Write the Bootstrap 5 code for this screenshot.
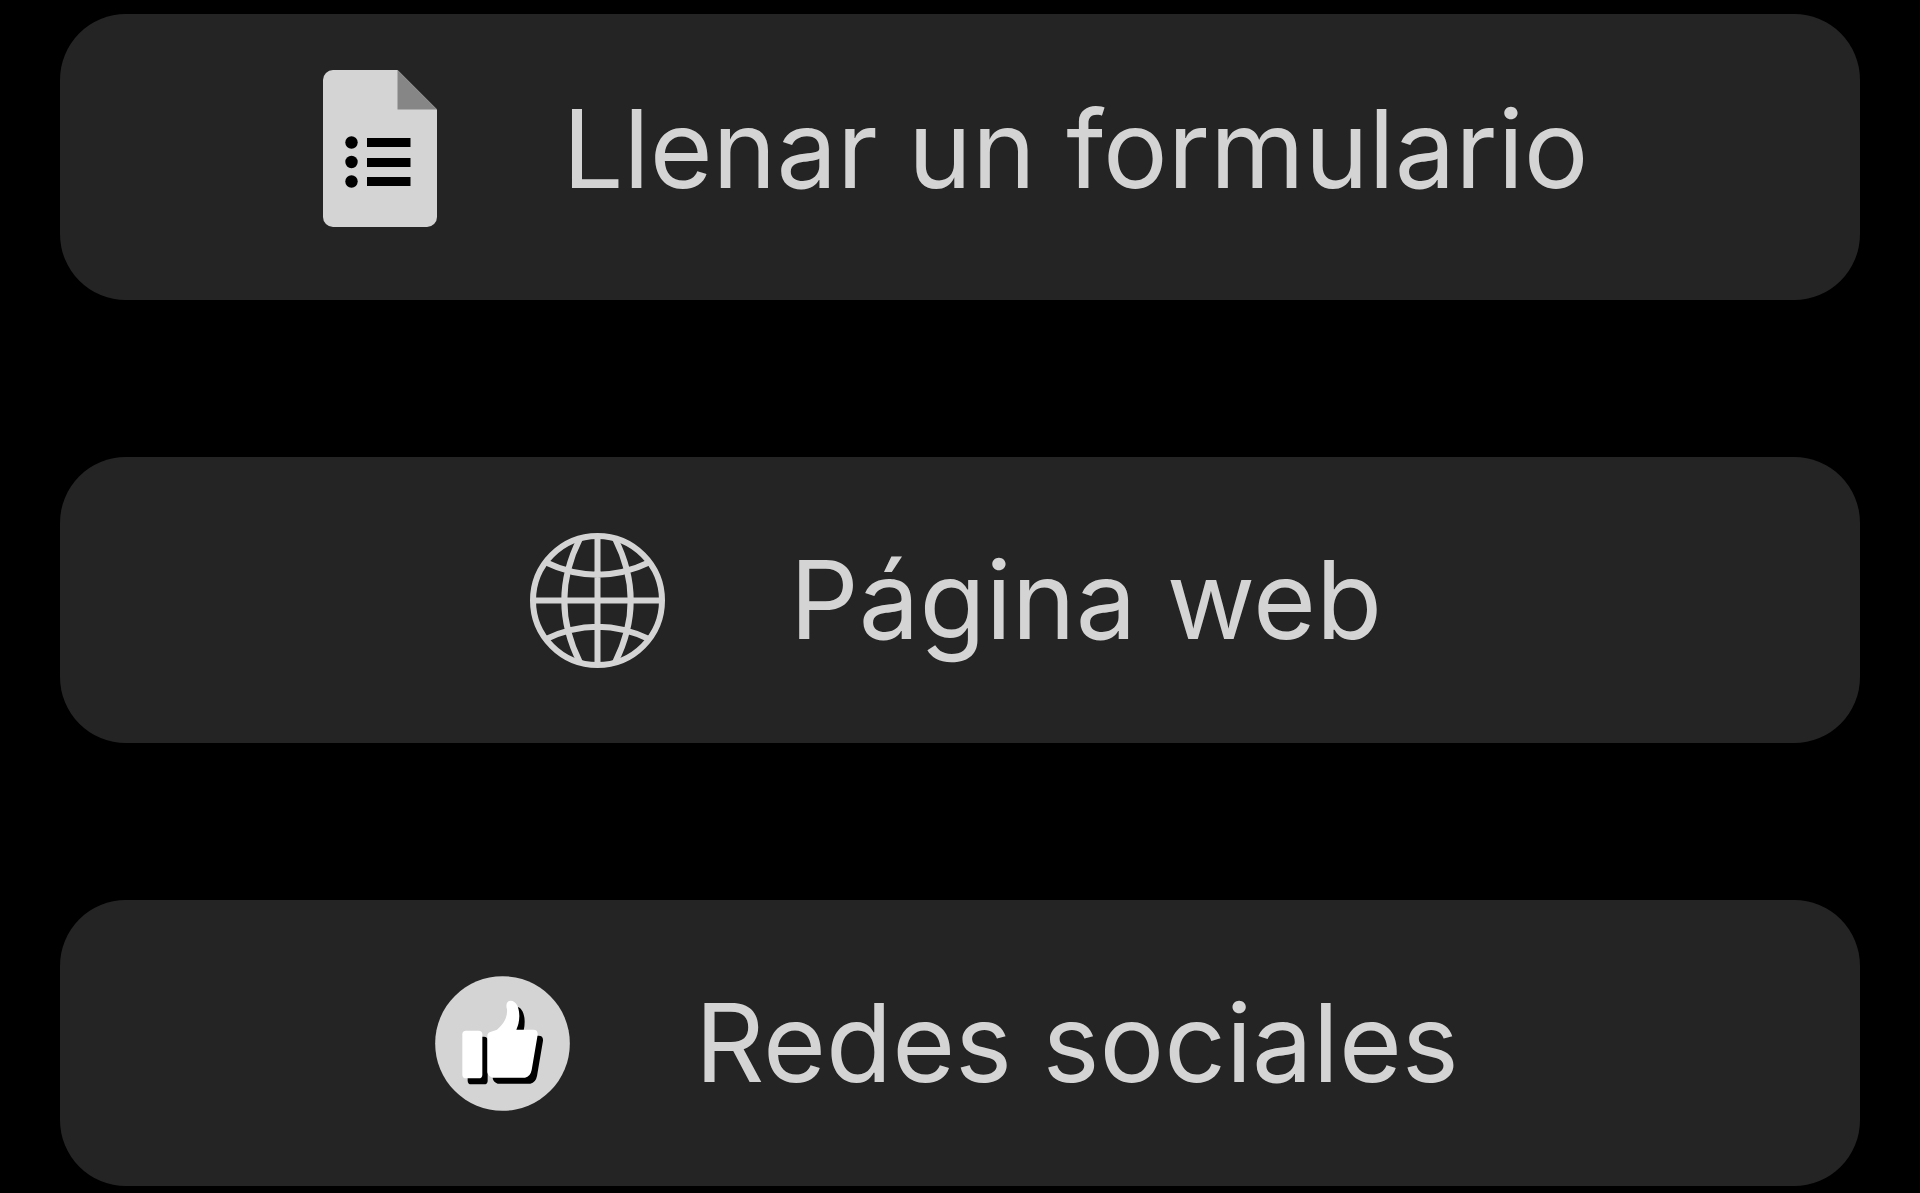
<!DOCTYPE html>
<html lang="es">
<head>
<meta charset="utf-8">
<meta name="viewport" content="width=device-width, initial-scale=1">
<title>Opciones</title>
<link href="https://cdn.jsdelivr.net/npm/bootstrap@5.3.0/dist/css/bootstrap.min.css" rel="stylesheet">
<style>
  body { background: #000; font-family: Inter, "Liberation Sans", sans-serif; }
  .option-list { padding: 14px 60px 7px; gap: 157px; }
  .option {
    min-height: 286px;
    padding-right: 8px;
    gap: 125px;
    border-radius: 66px;
    background: #242424;
    color: #d4d4d4;
    font-size: 108px;
    line-height: 132px;
  }
  .option:hover, .option:focus { background: #2c2c2c; color: #d4d4d4; }
  .option-form { padding-bottom: 17px; }
  .option-social { padding-right: 26px; }
  .glyph { width: 135px; height: 135px; }
  .glyph-doc { width: 114px; height: 157px; }
</style>
</head>
<body>
<main class="option-list d-flex flex-column">
  <a href="#formulario" class="option option-form d-flex align-items-center justify-content-center text-decoration-none">
    <svg class="glyph-doc flex-shrink-0" viewBox="0 0 114 157" aria-hidden="true">
      <path fill="#d4d4d4" d="M10 0H74.500L114 39.500V147a10 10 0 0 1-10 10H10a10 10 0 0 1-10-10V10A10 10 0 0 1 10 0z"/>
      <path fill="#868686" d="M74.500 0L114 39.500H74.500z"/>
      <circle cx="28.500" cy="72.500" r="6.200"/><circle cx="28.500" cy="92" r="6.200"/><circle cx="28.500" cy="111.500" r="6.200"/>
      <path d="M44 68h43.500v9H44zM44 88h43.500v9H44zM44 107h43.500v9H44z"/>
    </svg>
    <span>Llenar un formulario</span>
  </a>
  <a href="#web" class="option d-flex align-items-center justify-content-center text-decoration-none">
    <svg class="glyph flex-shrink-0" viewBox="0 0 135 135" fill="none" stroke="#d4d4d4" stroke-width="6" aria-hidden="true">
      <circle cx="67.500" cy="67.500" r="64.500"/>
      <path d="M67.500 3v129M3 67.500h129M50 5.500Q18.600 67.500 50 129.500M85 5.500Q116.400 67.500 85 129.500M15 29Q67.500 54.400 120 29M15 106.500Q67.500 81.100 120 106.500"/>
    </svg>
    <span>Página web</span>
  </a>
  <a href="#redes" class="option option-social d-flex align-items-center justify-content-center text-decoration-none">
    <svg class="glyph flex-shrink-0" viewBox="50 43 405 405" aria-hidden="true">
      <defs>
        <path id="hand" d="M207 222Q207 214 216 211L236 204C256 186 268 168 266 143C261 127 267 117 277 117C293 117 303 136 303 162C303 180 299 193 294 204H345Q359 204 358 219L340 325Q336 345 320 348H222Q210 345 207 332z"/>
        <rect id="cuff" x="132" y="207" width="60" height="143" rx="11"/>
      </defs>
      <circle cx="252.500" cy="245.500" r="202" fill="#d4d4d4"/>
      <use href="#cuff" x="16" y="18"/><use href="#hand" x="16" y="18"/>
      <g fill="#fff"><use href="#cuff"/><use href="#hand"/></g>
    </svg>
    <span>Redes sociales</span>
  </a>
</main>
<script src="https://cdn.jsdelivr.net/npm/bootstrap@5.3.0/dist/js/bootstrap.bundle.min.js"></script>
</body>
</html>
